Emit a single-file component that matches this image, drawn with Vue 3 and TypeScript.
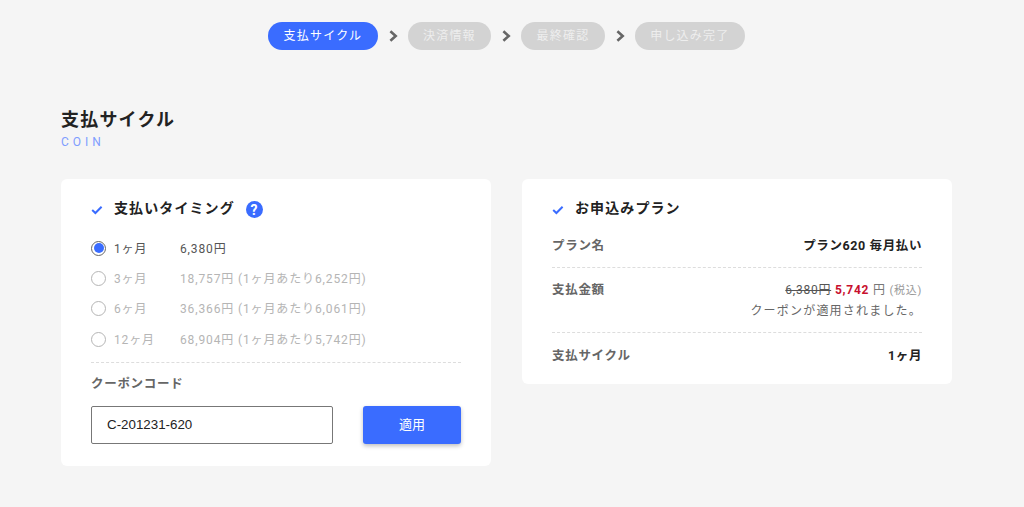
<script setup lang="ts">
const steps = ['支払サイクル', '決済情報', '最終確認', '申し込み完了']
const options = [
  { term: '1ヶ月', price: '6,380円', on: true },
  { term: '3ヶ月', price: '18,757円 (1ヶ月あたり6,252円)', on: false },
  { term: '6ヶ月', price: '36,366円 (1ヶ月あたり6,061円)', on: false },
  { term: '12ヶ月', price: '68,904円 (1ヶ月あたり5,742円)', on: false },
]
</script>

<template>
  <div class="page">
    <nav class="steps">
      <template v-for="(s, i) in steps" :key="s">
        <svg v-if="i > 0" class="chev" width="10" height="12" viewBox="0 0 10 12"><path d="M2.4 1.2 L7.7 6 L2.4 10.8" fill="none" stroke="#666" stroke-width="2.6" /></svg>
        <span class="pill" :class="{ active: i === 0 }">{{ s }}</span>
      </template>
    </nav>

    <header class="head">
      <h1>支払サイクル</h1>
      <p>COIN</p>
    </header>

    <main class="cols">
      <section class="card left">
        <h2 class="title">
          <svg class="check" width="12" height="10" viewBox="0 0 12 10"><path d="M1.2 5 L4.4 8 L10.6 1.8" fill="none" stroke="#3a6cff" stroke-width="2" /></svg>
          <span>支払いタイミング</span>
          <svg class="help" width="17" height="17" viewBox="0 0 17 17"><circle cx="8.5" cy="8.5" r="8.5" fill="#3a6cff" /><text x="8.5" y="13.5" text-anchor="middle" class="q">?</text></svg>
        </h2>
        <ul class="opts">
          <li v-for="o in options" :key="o.term" class="opt" :class="{ off: !o.on }">
            <span class="radio"><i v-if="o.on"></i></span>
            <span class="term">{{ o.term }}</span>
            <span class="price">{{ o.price }}</span>
          </li>
        </ul>
        <div class="coupon">
          <div class="clabel">クーポンコード</div>
          <div class="crow">
            <input class="cinput" value="C-201231-620" />
            <button class="cbtn">適用</button>
          </div>
        </div>
      </section>

      <section class="card right">
        <h2 class="title">
          <svg class="check" width="12" height="10" viewBox="0 0 12 10"><path d="M1.2 5 L4.4 8 L10.6 1.8" fill="none" stroke="#3a6cff" stroke-width="2" /></svg>
          <span>お申込みプラン</span>
        </h2>
        <div class="row r1">
          <span class="k">プラン名</span>
          <span class="v">プラン620 毎月払い</span>
        </div>
        <div class="row r2">
          <span class="k">支払金額</span>
          <div class="amt">
            <div><s>6,380円</s> <b>5,742</b> <span class="yen">円</span> <small>(税込)</small></div>
            <div class="note">クーポンが適用されました。</div>
          </div>
        </div>
        <div class="row r3">
          <span class="k">支払サイクル</span>
          <span class="v">1ヶ月</span>
        </div>
      </section>
    </main>
  </div>
</template>

<style>
html, body { margin: 0; background: #f5f5f5; }
</style>

<style scoped>
.page {
  height: 507px;
  overflow: hidden;
  box-sizing: border-box;
  padding: 22px 72px 0 61px;
  background: #f5f5f5;
  font-family: Roboto, "Noto Sans CJK JP", sans-serif;
  color: #222;
}
.steps { display: flex; justify-content: center; align-items: center; gap: 10px; }
.chev { flex: none; }
.pill {
  height: 28px; line-height: 29px; padding: 0 15.4px; border-radius: 14px;
  background: #d3d3d3; color: #eee; font-size: 12px; letter-spacing: 1.2px; white-space: nowrap;
}
.pill.active { background: #3a6cff; color: #fff; }
.head { margin-top: 57px; }
h1 { margin: 0; font-size: 18px; line-height: 26px; font-weight: 700; letter-spacing: 1.2px; color: #222; }
.head p { margin: 1px 0 0; font-size: 12px; line-height: 16px; letter-spacing: 4px; color: #7f9dff; }
.cols { display: flex; align-items: flex-start; justify-content: space-between; margin-top: 29px; }
.card { width: 430px; box-sizing: border-box; background: #fff; border-radius: 6px; padding: 4px 30px 0; }
.left { height: 287px; }
.right { height: 205px; }
.title { margin: 0 0 2px; display: flex; align-items: center; height: 48px; font-size: 14px; font-weight: 700; letter-spacing: 1.1px; color: #222; }
.check { margin: 5px 11px 0 0; flex: none; }
.help { margin: 4px 0 0 11px; }
.q { font: 700 14px Roboto, sans-serif; fill: #fff; }
.opts { list-style: none; margin: 0; padding: 0; }
.opt { display: flex; align-items: center; height: 30.3px; font-size: 12px; letter-spacing: 0.87px; color: #555; }
.opt.off { color: #b5b5b5; }
.radio {
  width: 15px; height: 15px; box-sizing: border-box; border-radius: 50%; border: 1px solid #666; flex: none; margin-right: 8px;
  display: flex; align-items: center; justify-content: center;
}
.opt.off .radio { border-color: #b5b5b5; }
.radio i { width: 10px; height: 10px; border-radius: 50%; background: #3a6cff; }
.term { width: 66px; flex: none; padding-bottom: 2px; }
.price { padding-bottom: 2px; }
.coupon { margin-top: 8px; border-top: 1px dashed #ddd; }
.clabel { margin-top: 12px; font-size: 12.5px; line-height: 18px; font-weight: 700; letter-spacing: 0.7px; color: #666; }
.crow { display: flex; justify-content: space-between; margin-top: 13px; }
.cinput {
  width: 242px; height: 38px; box-sizing: border-box; border: 1px solid #777; border-radius: 2px; padding: 0 15px 2px;
  font: 13.33px "Liberation Sans", sans-serif; color: #222; background: #fff; outline: none;
}
.cbtn {
  width: 98px; height: 38px; border: 0; border-radius: 3px; background: #3a6cff; color: #fff;
  font: 13px "Noto Sans CJK JP", sans-serif; padding: 0 0 3px; box-shadow: 0 2px 4px rgba(0, 0, 0, .25);
}
.row { display: flex; justify-content: space-between; box-sizing: border-box; font-size: 12px; line-height: 18px; }
.k { font-size: 12.5px; font-weight: 700; letter-spacing: 0.7px; color: #666; }
.v { font-size: 12.5px; font-weight: 700; color: #222; letter-spacing: 0.6px; }
.r1 { height: 35px; padding-top: 4px; border-bottom: 1px dashed #ddd; }
.r2 { height: 65px; padding-top: 13px; border-bottom: 1px dashed #ddd; }
.r3 { padding-top: 14px; }
.amt { margin-top: -1px; text-align: right; line-height: 21px; color: #666; letter-spacing: 0.75px; }
.amt s { color: #555; }
.amt b { color: #c8102e; font-weight: 700; }
.amt small { font-size: 11px; color: #999; }
.yen { color: #777; }
.note { letter-spacing: 1.2px; }
</style>
